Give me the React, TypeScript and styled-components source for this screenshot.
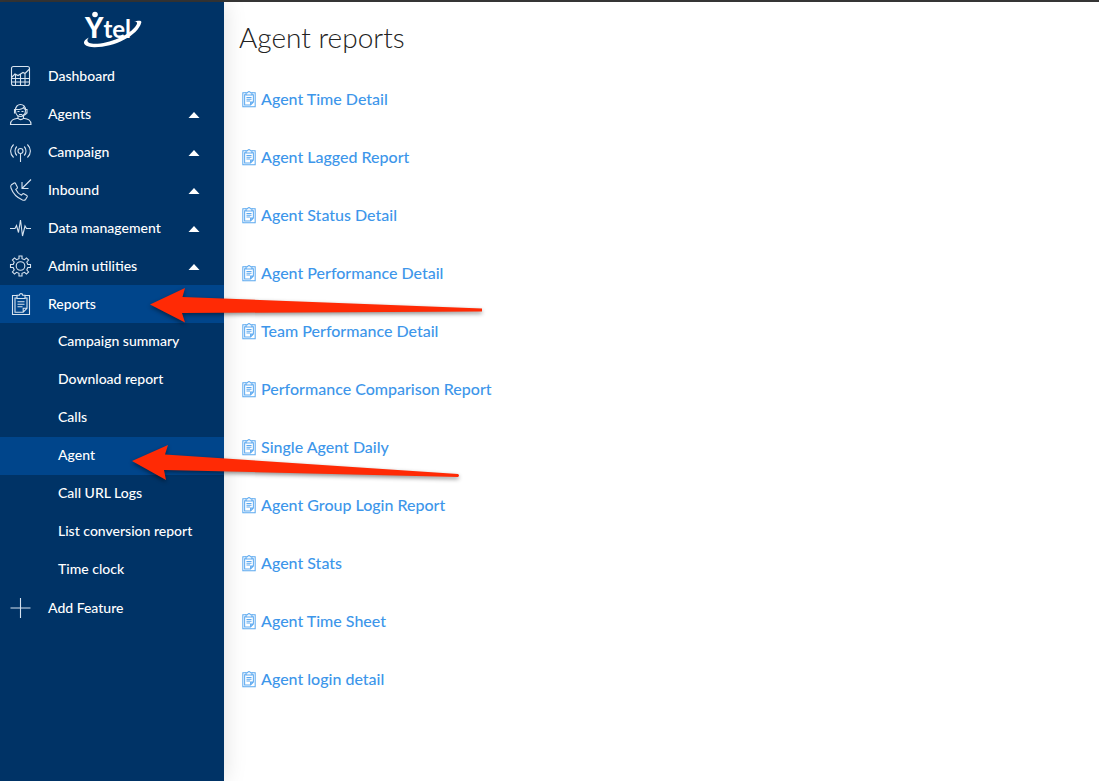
import React from 'react';
import styled, { createGlobalStyle } from 'styled-components';

const GlobalStyle = createGlobalStyle`
  *, *::before, *::after { box-sizing: border-box; }
  body {
    margin: 0;
    background: #fff;
    font-family: Lato, "Liberation Sans", sans-serif;
  }
`;

const Page = styled.div`
  position: relative;
  display: flex;
  min-height: 100vh;
  border-top: 2px solid #353535;
`;

const Sidebar = styled.aside`
  flex: 0 0 224px;
  background: #003366;
  box-shadow: 0 0 22px rgba(0, 0, 0, 0.13);
`;

const Brand = styled.a`
  display: flex;
  justify-content: center;
  height: 55px;
  padding-top: 8px;
`;

const Menu = styled.ul`
  margin: 0;
  padding: 0;
  list-style: none;
`;

const MenuButton = styled.button<{ $active?: boolean }>`
  display: flex;
  align-items: center;
  width: 100%;
  height: 38px;
  padding: 0 24px 0 9px;
  border: 0;
  background: ${(p) => (p.$active ? '#00458b' : 'transparent')};
  color: #fff;
  font: 500 14px/20px Lato, "Liberation Sans", sans-serif;
  text-align: left;
  cursor: pointer;
`;

const MenuIcon = styled.svg`
  flex: none;
  width: 23px;
  height: 24px;
  margin-right: 16px;
  fill: none;
  stroke: #d7e3ef;
  stroke-width: 1.1;
`;

const MenuLabel = styled.span`
  flex: 1;
`;

const Caret = styled.svg`
  width: 12px;
  height: 6px;
  margin-top: 2px;
  fill: #fff;
`;

const SubLink = styled.a<{ $active?: boolean }>`
  display: block;
  height: 38px;
  padding: 8px 16px 0 58px;
  background: ${(p) => (p.$active ? '#00458b' : 'transparent')};
  color: #fff;
  font-size: 14px;
  font-weight: 500;
  line-height: 20px;
  text-decoration: none;
  white-space: nowrap;
`;

const Main = styled.main`
  flex: 1;
  min-width: 0;
  padding: 17px 15px 32px;
`;

const Title = styled.h1`
  margin: 0 0 32px;
  color: #222;
  font-size: 28px;
  font-weight: 300;
  line-height: 36px;
`;

const ReportList = styled.ul`
  display: flex;
  flex-direction: column;
  gap: 34px;
  margin: 0;
  padding: 0 2px;
  list-style: none;
`;

const ReportLink = styled.a`
  display: inline-flex;
  align-items: center;
  gap: 4px;
  height: 24px;
  color: #3d96ea;
  font-size: 16px;
  font-weight: 500;
  line-height: 24px;
  text-decoration: none;
`;

const ReportIcon = styled.svg`
  width: 16px;
  height: 18px;
  fill: none;
  stroke: #5aa8f0;
  stroke-width: 1.4;
`;

const Annotations = styled.svg`
  position: absolute;
  top: -2px;
  left: 0;
  width: 500px;
  height: 500px;
  pointer-events: none;
  fill: #ff2a05;
  filter: drop-shadow(0 2px 2px rgba(0, 0, 0, 0.45));
`;

const clipboard = (
  <>
    <path d="M8 3.500H3.500v19h17v-19H16" />
    <path d="M8 6H6v14.200h8.200L18 16.300V6h-2M14.200 20.200v-3.900H18" />
    <path d="M8 6.500V3.300h2.300a1.700 1.700 0 0 1 3.400 0H16v3.200z" />
    <path d="M8.500 9.800h7M8.500 12.300h7M8.500 14.800h5" />
  </>
);

const icons: Record<string, React.ReactNode> = {
  dashboard: (
    <>
      <rect x="2.500" y="2.500" width="18" height="19" rx="2" />
      <path d="M2.500 13.500 6 10l3 1.500 5-3 2 1 4.500-4.500M2.500 14.500h18M2.500 18h18M6.500 10v11.500M11.500 10.500v11M16 9.500v12" />
    </>
  ),
  agent: (
    <>
      <path d="M6.500 8.500c-.5-8 10.500-8 10 0M6.500 8.500c0 8 10 8 10 0" />
      <path d="M6.500 7.500c4 .2 7-.5 8-2 .4 1.200 1 1.700 2 2M6.500 7.500h-1v3.500h1M16.500 7.500h1.500v3.500h-1.500M17.500 11c-.7 1.800-2.400 2.300-4.500 2.300M8.500 9.500h2M12.500 9.500h2M10 12.500h3" />
      <path d="M9 14v2.300c-4.500.7-7.500 1.400-7.500 6.200h20.500c0-4.800-3-5.500-7.500-6.200V14M9 16.300c1.700 1.700 3.800 1.700 5.500 0" />
    </>
  ),
  campaign: (
    <>
      <circle cx="11.500" cy="11" r="2.500" />
      <path d="M11.500 13.500v8.500M7.800 6.500c-2.400 2.500-2.400 6.500 0 9M15.200 6.500c2.400 2.500 2.400 6.500 0 9M4.600 4.500c-4 4-4 9.200 0 13M18.400 4.500c4 4 4 9.200 0 13" />
    </>
  ),
  inbound: (
    <>
      <path d="M5.200 5 2.500 6.700c-.8.700-1 2-.5 3.300 2 5.600 6 9.700 11.500 12 1.300.5 2.500.2 3.200-.7l1.500-2.600c.3-.6.100-1-.4-1.300l-3-1.700c-.6-.3-1-.1-1.400.4l-1 1.100c-2.300-1.100-4.400-3.300-5.600-5.800l1.300-1.100c.5-.4.5-.8.200-1.400L6.500 5.400c-.3-.5-.7-.7-1.300-.4z" />
      <path d="M22 1.500 13 10.500M13 4v6.500h6.500" />
    </>
  ),
  pulse: <path d="M1 12.500h5l1.500-3 2 7L11.500 4l2 16 2.500-10 1.500 2.500H22" />,
  gear: (
    <>
      <circle cx="11.500" cy="12" r="4.300" />
      <path d="M10 4.700V2h3v2.700l2.500 1 2-1.800 2.100 2.100-1.800 2 1 2.500h2.700v3h-2.700l-1 2.500 1.800 2-2.100 2.100-2-1.800-2.500 1V22h-3v-2.700l-2.500-1-2 1.800L3.400 18l1.800-2-1-2.500H1.500v-3h2.700l1-2.500-1.800-2 2.100-2.100 2 1.800z" />
    </>
  ),
  clipboard,
  plus: <path d="M11.500 2v20M1.500 12h20" />,
};

const mainItems = [
  { label: 'Dashboard', icon: 'dashboard' },
  { label: 'Agents', icon: 'agent', expandable: true },
  { label: 'Campaign', icon: 'campaign', expandable: true },
  { label: 'Inbound', icon: 'inbound', expandable: true },
  { label: 'Data management', icon: 'pulse', expandable: true },
  { label: 'Admin utilities', icon: 'gear', expandable: true },
];

const reportPages = [
  'Campaign summary',
  'Download report',
  'Calls',
  'Agent',
  'Call URL Logs',
  'List conversion report',
  'Time clock',
];

const agentReports = [
  'Agent Time Detail',
  'Agent Lagged Report',
  'Agent Status Detail',
  'Agent Performance Detail',
  'Team Performance Detail',
  'Performance Comparison Report',
  'Single Agent Daily',
  'Agent Group Login Report',
  'Agent Stats',
  'Agent Time Sheet',
  'Agent login detail',
];

function MenuItem(props: {
  label: string;
  icon: string;
  expandable?: boolean;
  active?: boolean;
  children?: React.ReactNode;
}) {
  return (
    <li>
      <MenuButton type="button" $active={props.active}>
        <MenuIcon viewBox="0 0 23 24" aria-hidden="true">{icons[props.icon]}</MenuIcon>
        <MenuLabel>{props.label}</MenuLabel>
        {props.expandable && (
          <Caret viewBox="0 0 12 6" aria-hidden="true">
            <path d="M6 0 11.500 6H.5z" />
          </Caret>
        )}
      </MenuButton>
      {props.children}
    </li>
  );
}

function Logo() {
  return (
    <svg width="60" height="40" viewBox="0 0 60 40" role="img" aria-label="Ytel">
      <g fill="#fff">
        <circle cx="13" cy="4.500" r="2.800" />
        <text x="3" y="28" fontFamily="Lato, sans-serif" fontSize="28" fontWeight="900">
          Y<tspan fontSize="24" fontWeight="700">tel</tspan>
        </text>
        <path d="M7 27.500C-1 31 .5 37 12 37.200 31 37.600 56 26 59.300 12.500 59.800 10 56 10.500 52 11.500c3.500 0 3.600 1.500 2.400 3.500C48 25.500 27 33.800 13 33.800c-7 0-9.500-2.700-6-6.300z" />
      </g>
    </svg>
  );
}

export default function App() {
  return (
    <>
      <GlobalStyle />
      <Page>
        <Sidebar>
          <Brand href="#"><Logo /></Brand>
          <nav aria-label="Main">
            <Menu>
              {mainItems.map((item) => <MenuItem key={item.label} {...item} />)}
              <MenuItem label="Reports" icon="clipboard" active>
                <Menu>
                  {reportPages.map((page) => (
                    <li key={page}>
                      <SubLink href="#" $active={page === 'Agent'}>{page}</SubLink>
                    </li>
                  ))}
                </Menu>
              </MenuItem>
              <MenuItem label="Add Feature" icon="plus" />
            </Menu>
          </nav>
        </Sidebar>
        <Main>
          <Title>Agent reports</Title>
          <ReportList>
            {agentReports.map((report) => (
              <li key={report}>
                <ReportLink href="#">
                  <ReportIcon viewBox="1 0 22 24" aria-hidden="true">{clipboard}</ReportIcon>
                  {report}
                </ReportLink>
              </li>
            ))}
          </ReportList>
        </Main>
        <Annotations viewBox="0 0 500 500" aria-hidden="true">
          <path d="M150 304.500 185 288l-2.500 9L482 308.500v3L182 313l3 9.500z" />
          <path d="M132 461 168 445l-3 9.500L458 474q2 1.500 0 3L164 470l2 10z" />
        </Annotations>
      </Page>
    </>
  );
}
